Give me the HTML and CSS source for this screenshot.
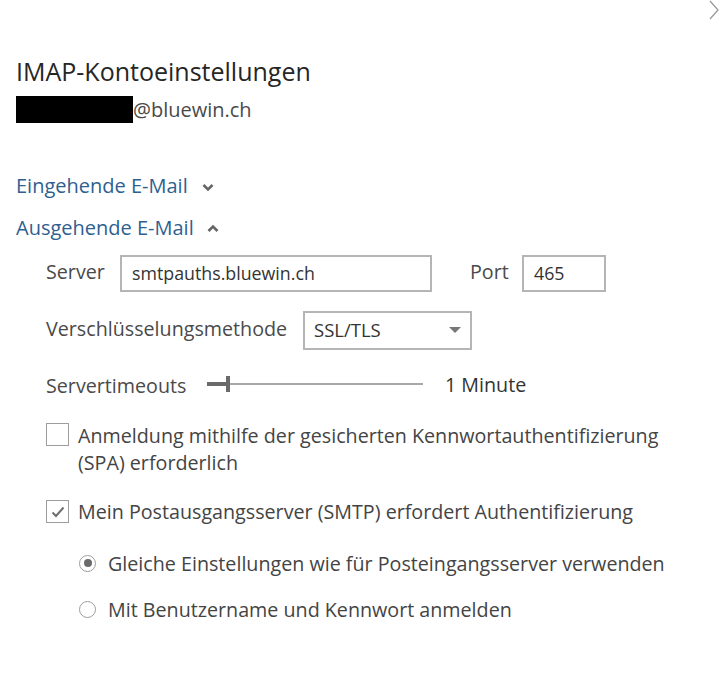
FILE: index.html
```html
<!DOCTYPE html>
<html lang="de">
<head>
<meta charset="utf-8">
<title>IMAP-Kontoeinstellungen</title>
<link rel="stylesheet" href="styles.css">
</head>
<body>
<div class="page">
  <svg class="close" width="12" height="20" viewBox="0 0 12 20"><path d="M2 1 L10 10 L2 19" fill="none" stroke="#9a9a9a" stroke-width="1.3"/></svg>
  <h1 class="title">IMAP-Kontoeinstellungen</h1>
  <div class="account"><span class="redact"></span><span class="domain">@bluewin.ch</span></div>

  <div class="section-head first">Eingehende E-Mail
    <svg class="chev" width="12" height="9" viewBox="0 0 12 9"><path d="M1.5 2 L6 6.5 L10.5 2" fill="none" stroke="#666" stroke-width="2.6"/></svg>
  </div>
  <div class="section-head second">Ausgehende E-Mail
    <svg class="chev up" width="12" height="9" viewBox="0 0 12 9"><path d="M1.5 7 L6 2.5 L10.5 7" fill="none" stroke="#666" stroke-width="2.6"/></svg>
  </div>

  <div class="body">
    <div class="row server-row">
      <span class="label server-label">Server</span>
      <div class="input server">smtpauths.bluewin.ch</div>
      <span class="label port-label">Port</span>
      <div class="input port">465</div>
    </div>
    <div class="row enc-row">
      <span class="label enc-label">Verschlüsselungsmethode</span>
      <div class="select">SSL/TLS<span class="tri"></span></div>
    </div>
    <div class="row timeout-row">
      <span class="label timeout-label">Servertimeouts</span>
      <div class="slider"><span class="fill"></span><span class="thumb"></span><span class="track"></span></div>
      <span class="value">1 Minute</span>
    </div>

    <div class="check-row spa">
      <span class="box"></span>
      <span class="check-label">Anmeldung mithilfe der gesicherten Kennwortauthentifizierung (SPA) erforderlich</span>
    </div>
    <div class="check-row smtp">
      <span class="box"><svg width="20" height="20" viewBox="0 0 20 20"><path d="M4.5 10.5 L8 14 L15.5 5.5" fill="none" stroke="#6e6e6e" stroke-width="2"/></svg></span>
      <span class="check-label">Mein Postausgangsserver (SMTP) erfordert Authentifizierung</span>
    </div>

    <div class="radio-row first-radio">
      <span class="radio on"></span>
      <span class="radio-label">Gleiche Einstellungen wie für Posteingangsserver verwenden</span>
    </div>
    <div class="radio-row second-radio">
      <span class="radio"></span>
      <span class="radio-label">Mit Benutzername und Kennwort anmelden</span>
    </div>
  </div>
</div>
</body>
</html>
```
FILE: styles.css
```css
* { box-sizing: border-box; }
html, body { margin: 0; padding: 0; background: #fff; }
body {
  font-family: "Open Sans", "Noto Sans", sans-serif;
  color: #333;
  width: 721px;
  height: 691px;
  overflow: hidden;
}
.page { position: relative; padding: 54px 0 0 16px; }
.close { position: absolute; right: 1px; top: 0; }
.title {
  margin: 0;
  font-weight: 400;
  font-size: 25px;
  line-height: 34px;
  height: 34px;
  color: #262626;
}
.account { display: flex; align-items: center; height: 28px; margin-top: 7px; }
.redact { display: inline-block; width: 117px; height: 27px; background: #000; }
.domain { font-size: 20px; color: #4a4a4a; }

.section-head {
  display: flex; align-items: center;
  font-size: 20px; color: #2f5f8f; line-height: 28px; height: 28px;
}
.section-head.first { margin-top: 49px; }
.section-head.second { margin-top: 14px; }
.chev { margin-left: 14px; margin-top: 2px; }
.chev.up { margin-left: 13px; margin-top: 0; }

.body { padding-left: 30px; font-size: 19.7px; color: #444; }
.row { display: flex; align-items: center; }
.label { color: #4a4a4a; flex: none; }
.server-row { margin-top: 13px; height: 36px; }
.server-label { width: 74px; margin-top: -4px; }
.input {
  height: 37px; border: 2px solid #b5b5b5; background: #fff;
  font-size: 17.8px; color: #333; padding-left: 10px;
  display: flex; align-items: center;
}
.input.server { width: 312px; }
.port-label { width: 52px; margin-left: 38px; margin-top: -4px; }
.input.port { width: 84px; }

.enc-row { margin-top: 20px; height: 38px; }
.enc-label { width: 257px; margin-top: -4px; }
.select {
  position: relative;
  width: 169px; height: 39px;
  border: 2px solid #b5b5b5; font-size: 18.5px; color: #333;
  padding-left: 9px; display: flex; align-items: center; padding-bottom: 2px;
}
.tri {
  position: absolute; right: 9px; top: 14px;
  width: 0; height: 0;
  border-left: 6px solid transparent; border-right: 6px solid transparent;
  border-top: 6px solid #777;
}

.timeout-row { margin-top: 21px; height: 28px; }
.timeout-label { width: 161px; margin-top: 2px; }
.slider { display: flex; align-items: center; width: 216px; height: 18px; }
.slider .fill { width: 19px; height: 4px; background: #6a6a6a; }
.slider .thumb { width: 4px; height: 16px; background: #6a6a6a; }
.slider .track { flex: 1; height: 2px; background: #a8a8a8; }
.value { margin-left: 22px; color: #333; }

.check-row { display: flex; align-items: flex-start; }
.check-row .box {
  flex: none; width: 23px; height: 23px; border: 1px solid #9d9d9d; background: #fff;
  display: flex; align-items: center; justify-content: center;
  margin-top: 1px;
}
.check-label { margin-left: 9px; line-height: 27px; color: #444; max-width: 595px; }
.spa { margin-top: 24px; }
.smtp { margin-top: 22px; }
.smtp .box { margin-top: 2px; }

.radio-row { display: flex; align-items: center; padding-left: 33px; height: 28px; }
.first-radio { margin-top: 24px; }
.second-radio { margin-top: 18px; }
.radio {
  flex: none; width: 17px; height: 17px; border-radius: 50%;
  border: 1px solid #9d9d9d; background: #fff; position: relative;
}
.radio.on::after {
  content: ""; position: absolute; left: 3.5px; top: 3.5px;
  width: 8px; height: 8px; border-radius: 50%; background: #6a6a6a;
}
.radio-label { margin-left: 12px; color: #444; }
```
